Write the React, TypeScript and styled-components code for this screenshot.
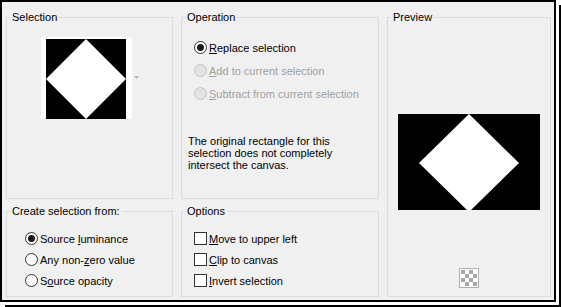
import React from "react";
import styled, { createGlobalStyle } from "styled-components";

const GlobalStyle = createGlobalStyle`
  html, body {
    margin: 0;
    padding: 0;
    background: #ffffff;
  }
  body {
    font-family: "Liberation Sans", Arial, sans-serif;
    font-size: 11px;
    color: #000;
  }
`;

const Page = styled.div`
  width: 561px;
  height: 307px;
  overflow: hidden;
`;

const Frame = styled.div`
  box-sizing: border-box;
  width: 556px;
  height: 302px;
  border: 2px solid #000;
  background: #f0f0f0;
  box-shadow: 3px 3px 0 #fff, 5px 5px 0 #000;
  display: grid;
  grid-template-columns: 167px 198px 164px;
  grid-template-rows: 188px 92px;
  grid-template-areas:
    "selection operation preview"
    "source options preview";
  column-gap: 8px;
  row-gap: 6px;
  padding: 9px 3px 3px 4px;
`;

const Group = styled.fieldset<{ $area: string }>`
  margin: 0;
  padding: 0;
  min-width: 0;
  border: 1px solid #dcdcdc;
  display: flex;
  flex-direction: column;
  grid-area: ${(p) => p.$area};
`;

const Legend = styled.legend`
  margin-left: 3px;
  padding: 0 2px;
  font-size: 11px;
  line-height: 12px;
  color: #000;
`;

const ThumbRow = styled.div`
  display: flex;
  align-items: center;
  justify-content: center;
  gap: 2px;
  padding-top: 14px;
`;

const Thumb = styled.div`
  width: 91px;
  height: 82px;
  background: #fff;
  display: flex;
  justify-content: center;
  padding-top: 2px;
  box-sizing: border-box;
`;

const List = styled.div<{ $top: number; $left: number; $row: number }>`
  display: flex;
  flex-direction: column;
  padding: ${(p) => p.$top}px 0 0 ${(p) => p.$left}px;
  & > * {
    height: ${(p) => p.$row}px;
  }
`;

const Option = styled.label<{ $disabled?: boolean }>`
  display: flex;
  align-items: center;
  gap: 2px;
  line-height: 12px;
  white-space: nowrap;
  color: ${(p) => (p.$disabled ? "#a0a0a0" : "#000")};
`;

const Radio = styled.span<{ $checked?: boolean; $disabled?: boolean }>`
  box-sizing: border-box;
  width: 13px;
  height: 13px;
  flex: none;
  border-radius: 50%;
  border: 1px solid ${(p) => (p.$disabled ? "#c6c6c6" : "#333")};
  background: ${(p) => (p.$disabled ? "#e3e3e3" : "#fff")};
  display: flex;
  align-items: center;
  justify-content: center;
  &::after {
    content: "";
    display: ${(p) => (p.$checked ? "block" : "none")};
    width: 7px;
    height: 7px;
    border-radius: 50%;
    background: #1a1a1a;
  }
`;

const Check = styled.span`
  box-sizing: border-box;
  width: 13px;
  height: 13px;
  flex: none;
  border: 1px solid #333;
  background: #fff;
`;

const Key = styled.span`
  text-decoration: underline;
  text-underline-offset: 1px;
`;

const Note = styled.p`
  margin: 30px 0 0 6px;
  line-height: 12px;
  width: 170px;
`;

const PreviewBody = styled.div`
  display: flex;
  flex-direction: column;
  align-items: center;
  padding-top: 91px;
`;

const PreviewImage = styled.svg`
  display: block;
  overflow: visible;
`;

const CheckerButton = styled.svg`
  display: block;
  margin-top: 58px;
`;

function Diamond() {
  return (
    <svg width="80" height="80" viewBox="0 0 80 80" style={{ display: "block" }}>
      <rect width="80" height="80" fill="#000" />
      <polygon points="40,0 80,40 40,80 0,40" fill="#fff" />
    </svg>
  );
}

function DropArrow() {
  return (
    <svg width="5" height="4" viewBox="0 0 5 4">
      <polygon points="0,0 5,0 2.5,3" fill="#b4b4b4" />
    </svg>
  );
}

function Checker() {
  const cells = [];
  for (let r = 0; r < 4; r++) {
    for (let c = 0; c < 4; c++) {
      if ((r + c) % 2 === 0) {
        cells.push(<rect key={`${r}-${c}`} x={2 + c * 4} y={2 + r * 4} width="4" height="4" fill="#a8a8a8" />);
      }
    }
  }
  return (
    <CheckerButton width="20" height="20" viewBox="0 0 20 20">
      <rect x="0.5" y="0.5" width="19" height="19" fill="#fff" stroke="#b0b0b0" />
      {cells}
    </CheckerButton>
  );
}

export default function App() {
  return (
    <Page>
      <GlobalStyle />
      <Frame>
        <Group $area="selection">
          <Legend>Selection</Legend>
          <ThumbRow>
            <Thumb>
              <Diamond />
            </Thumb>
            <DropArrow />
          </ThumbRow>
        </Group>

        <Group $area="operation">
          <Legend>Operation</Legend>
          <List $top={13} $left={12} $row={23}>
            <Option>
              <Radio $checked />
              <span>
                <Key>R</Key>eplace selection
              </span>
            </Option>
            <Option $disabled>
              <Radio $disabled />
              <span>
                <Key>A</Key>dd to current selection
              </span>
            </Option>
            <Option $disabled>
              <Radio $disabled />
              <span>
                <Key>S</Key>ubtract from current selection
              </span>
            </Option>
          </List>
          <Note>
            The original rectangle for this selection does not completely intersect the canvas.
          </Note>
        </Group>

        <Group $area="preview">
          <Legend>Preview</Legend>
          <PreviewBody>
            <PreviewImage width="142" height="96" viewBox="0 0 142 96">
              <rect width="142" height="96" fill="#000" />
              <polygon points="71,0 121,49 71,98 21,49" fill="#fff" />
            </PreviewImage>
            <Checker />
          </PreviewBody>
        </Group>

        <Group $area="source">
          <Legend>Create selection from:</Legend>
          <List $top={11} $left={18} $row={21}>
            <Option>
              <Radio $checked />
              <span>
                Source <Key>l</Key>uminance
              </span>
            </Option>
            <Option>
              <Radio />
              <span>
                Any non-<Key>z</Key>ero value
              </span>
            </Option>
            <Option>
              <Radio />
              <span>
                S<Key>o</Key>urce opacity
              </span>
            </Option>
          </List>
        </Group>

        <Group $area="options">
          <Legend>Options</Legend>
          <List $top={11} $left={12} $row={21}>
            <Option>
              <Check />
              <span>
                <Key>M</Key>ove to upper left
              </span>
            </Option>
            <Option>
              <Check />
              <span>
                <Key>C</Key>lip to canvas
              </span>
            </Option>
            <Option>
              <Check />
              <span>
                <Key>I</Key>nvert selection
              </span>
            </Option>
          </List>
        </Group>
      </Frame>
    </Page>
  );
}
